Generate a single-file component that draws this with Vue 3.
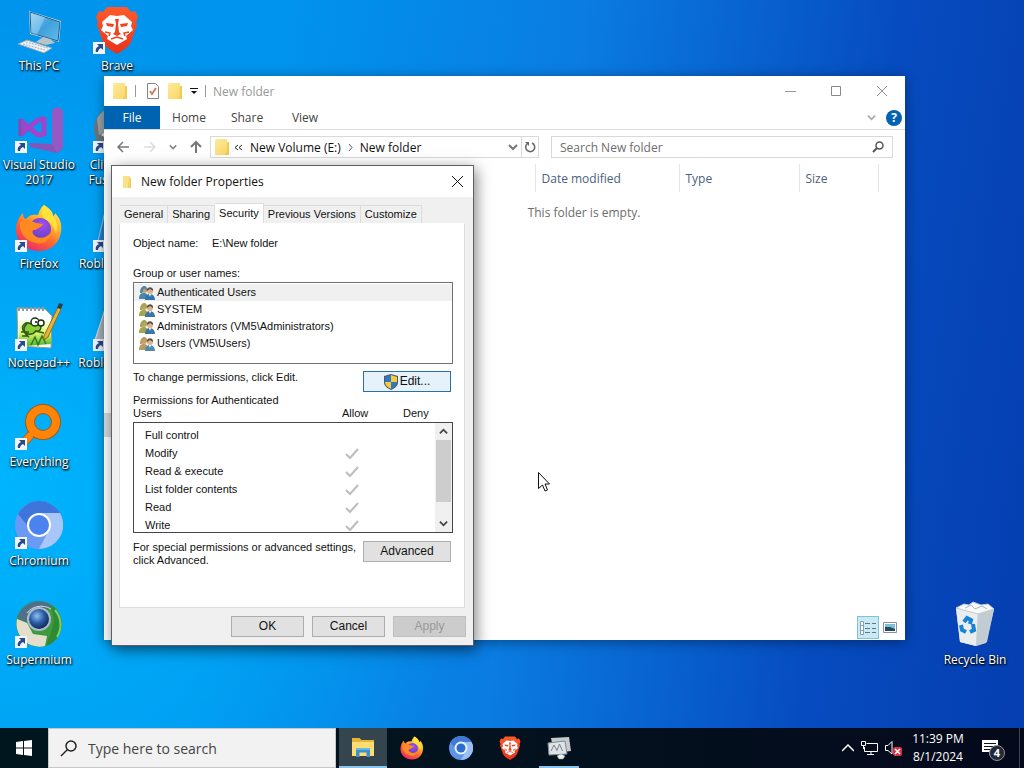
<script setup>
import { ref } from 'vue'

const shortcuts = [
  { name: 'This PC', icon: 'pc', link: false },
  { name: 'Visual Studio 2017', icon: 'vs', link: true },
  { name: 'Firefox', icon: 'firefox', link: true },
  { name: 'Notepad++', icon: 'notepad', link: true },
  { name: 'Everything', icon: 'everything', link: true },
  { name: 'Chromium', icon: 'chromium', link: true },
  { name: 'Supermium', icon: 'supermium', link: true },
  { name: 'Brave', icon: 'brave', link: true },
  { name: 'Clickteam Fusion 2.5', icon: 'clickteam', link: true },
  { name: 'Roblox Player', icon: 'roblox-player', link: true },
  { name: 'Roblox Studio', icon: 'roblox-studio', link: true }
]

const ribbon = ['Home', 'Share', 'View']
const tabs = ['General', 'Sharing', 'Security', 'Previous Versions', 'Customize']
const activeTab = ref('Security')

const users = [
  { name: 'Authenticated Users', left: '#4a86a8', right: '#2f75ad' },
  { name: 'SYSTEM', left: '#a3a650', right: '#3f73a6' },
  { name: 'Administrators (VM5\\Administrators)', left: '#a3a650', right: '#3f73a6' },
  { name: 'Users (VM5\\Users)', left: '#b99a63', right: '#4f8bb0' }
]
const selectedUser = ref('Authenticated Users')

const permissions = [
  { name: 'Full control', allow: false },
  { name: 'Modify', allow: true },
  { name: 'Read & execute', allow: true },
  { name: 'List folder contents', allow: true },
  { name: 'Read', allow: true },
  { name: 'Write', allow: true }
]

const taskbar = [
  { name: 'File Explorer', icon: 'explorer', state: 'active' },
  { name: 'Firefox', icon: 'firefox', state: '' },
  { name: 'Chromium', icon: 'chromium-bar', state: '' },
  { name: 'Brave', icon: 'brave', state: '' },
  { name: 'Monitor', icon: 'monitor', state: 'running' }
]

const folderSearch = ref('')
const taskSearch = ref('')
</script>

<template>
  <div class="screen">
    <!-- Icon sprite -->
    <svg class="sprite" width="0" height="0" aria-hidden="true">
      <defs>
        <linearGradient id="g-screen" x1="0" y1="0" x2="1" y2="1">
          <stop offset="0" stop-color="#8fd0f2" />
          <stop offset="0.5" stop-color="#3fa0dc" />
          <stop offset="1" stop-color="#63bdec" />
        </linearGradient>
        <linearGradient id="g-brave" x1="0" y1="0" x2="0" y2="1">
          <stop offset="0" stop-color="#ff5a2a" />
          <stop offset="1" stop-color="#e8321a" />
        </linearGradient>
        <linearGradient id="g-fox" x1="0.8" y1="0" x2="0.2" y2="1">
          <stop offset="0" stop-color="#fff04a" />
          <stop offset="0.35" stop-color="#ffb02e" />
          <stop offset="0.6" stop-color="#ff6a30" />
          <stop offset="1" stop-color="#e8216e" />
        </linearGradient>
        <radialGradient id="g-foxcore" cx="0.6" cy="0.3" r="0.8">
          <stop offset="0" stop-color="#a34df0" />
          <stop offset="1" stop-color="#5a3fc0" />
        </radialGradient>
        <linearGradient id="g-note" x1="0" y1="0" x2="0" y2="1">
          <stop offset="0" stop-color="#fdfff0" />
          <stop offset="0.5" stop-color="#e3f56a" />
          <stop offset="1" stop-color="#4fb52a" />
        </linearGradient>
        <radialGradient id="g-globe" cx="0.4" cy="0.35" r="0.7">
          <stop offset="0" stop-color="#8fc0f0" />
          <stop offset="0.5" stop-color="#2c5fa8" />
          <stop offset="1" stop-color="#0d2350" />
        </radialGradient>
        <linearGradient id="g-folder" x1="0" y1="0" x2="1" y2="1">
          <stop offset="0" stop-color="#ffeb9c" />
          <stop offset="1" stop-color="#f8d564" />
        </linearGradient>
      </defs>

      <symbol id="i-pc" viewBox="0 0 48 48">
        <path d="M14 5 46 15 44 36 15 28Z" fill="#d6dde2" />
        <path d="M15 6 45 16 43 35 16 27Z" fill="url(#g-screen)" stroke="#245f88" stroke-width="1" />
        <path d="M16 7 30 11 22 29 16 27Z" fill="#c8ebfb" opacity="0.35" />
        <path d="M28 31 35 33 40 37 31 39 21 36Z" fill="#b9c3ca" />
        <path d="M3 38 12 34 37 42 29 47Z" fill="#eef3f6" stroke="#8da3b2" stroke-width="1" />
        <path d="M8 38 30 44M11 36 33 42" stroke="#9fb1bd" stroke-width="1" stroke-dasharray="2 1" />
      </symbol>

      <symbol id="i-vs" viewBox="0 0 48 48">
        <path d="M37 5 42 2 48 5V43L42 48 15 42V38L37 39Z" fill="#8456bc" />
        <path d="M37 5 42 2 48 5V43L42 48 37 39Z" fill="#9558c4" />
        <path d="M6 16 23 30 29 29V14L23 15 6 29Z" fill="none" stroke="#a044cc" stroke-width="5" stroke-linejoin="round" />
        <path d="M5 14V31" stroke="#7c4fb4" stroke-width="3" />
      </symbol>

      <symbol id="i-firefox" viewBox="0 0 48 48">
        <path d="M29 1C34 4 38 8 38 12C40 11 40 10 40 9C45 14 47 20 46 27C45 39 36 47 24 47C11 47 1 38 1 26C1 18 4 13 8 9C8 13 9 14 11 15C14 11 18 10 23 11C24 7 26 3 29 1Z" fill="url(#g-fox)" />
        <circle cx="25" cy="25" r="11" fill="url(#g-foxcore)" />
        <path d="M5 18C11 15 16 16 21 19L28 20C27 23 22 24 21 26C18 25 16 28 19 31C24 36 32 34 36 28C35 37 28 41 21 39C11 37 4 29 5 18Z" fill="#ff8a20" />
        <path d="M29 1C34 4 38 8 38 12C42 17 43 23 41 29C39 22 35 18 30 15C25 12 26 6 29 1Z" fill="#ffe63b" opacity="0.85" />
      </symbol>

      <symbol id="i-notepad" viewBox="0 0 48 48">
        <path d="M2 5 30 6 37 13 36 45 3 43Z" fill="#fff" stroke="#8da080" stroke-width="1" />
        <path d="M4 17 36 18 36 41 11 43 4 38Z" fill="url(#g-note)" />
        <path d="M4 4V8M8 4V8M12 4V8M16 4V8M20 4V8M24 4V8M28 4V8" stroke="#8d9ba5" stroke-width="2" />
        <path d="M8 27C6 22 11 18 16 21L23 19C28 23 26 29 21 28C17 33 11 32 8 27Z" fill="#86cf35" stroke="#2d5a1c" stroke-width="1.5" />
        <path d="M12 21C7 24 9 31 14 34M6 29H14M7 33H13M20 28L29 30" stroke="#2d5a1c" stroke-width="1.5" fill="none" />
        <circle cx="20" cy="19" r="4" fill="#fff" stroke="#18320e" stroke-width="1.5" />
        <circle cx="26" cy="20" r="3" fill="#fff" stroke="#18320e" stroke-width="1.5" />
        <circle cx="21" cy="19" r="1" fill="#111" />
        <path d="M16 42 20 34 23 42 27 33 31 41" fill="none" stroke="#2f7a22" stroke-width="1.5" />
        <path d="M29 33 43 4 46 6 33 34 29 37Z" fill="#e4b53d" stroke="#8d6b22" stroke-width="1" />
        <path d="M42 5 44 0 48 1 46 6Z" fill="#2b3c48" />
      </symbol>

      <symbol id="i-everything" viewBox="0 0 48 48">
        <path d="M15 28 5 39 11 44 21 33" fill="#ff8408" stroke="#a35a12" stroke-width="1" />
        <circle cx="28" cy="20" r="13" fill="none" stroke="#a35a12" stroke-width="10" />
        <circle cx="28" cy="20" r="13" fill="none" stroke="#ff8408" stroke-width="8" />
        <path d="M18 26 8 38 12 40 22 31Z" fill="#ff8408" />
      </symbol>

      <symbol id="i-chromium" viewBox="0 0 48 48">
        <circle cx="24" cy="24" r="24" fill="#6b9af4" />
        <path d="M3 13A24 24 0 0 0 24 48L34 29 14 29Z" fill="#6b9af4" />
        <path d="M24 12H45A24 24 0 0 1 24 48L34 29Z" fill="#a9c6fb" />
        <path d="M3 13A24 24 0 0 1 45 12H24C17 12 13 17 12 24Z" fill="#3f74da" />
        <circle cx="24" cy="24" r="12" fill="#fff" />
        <circle cx="24" cy="24" r="10" fill="#4a82f0" />
      </symbol>

      <symbol id="i-chromium-bar" viewBox="0 0 48 48">
        <circle cx="24" cy="24" r="24" fill="#5b96e8" />
        <path d="M24 12H45A24 24 0 0 1 24 48L34 29Z" fill="#98c0f6" />
        <path d="M3 13A24 24 0 0 1 45 12H24C17 12 13 17 12 24Z" fill="#4379d2" />
        <circle cx="24" cy="24" r="13" fill="#e8f3ff" />
        <circle cx="24" cy="24" r="9" fill="#2f6cd0" />
      </symbol>

      <symbol id="i-supermium" viewBox="0 0 48 48">
        <circle cx="24" cy="24" r="23" fill="#3f9a3e" />
        <path d="M2 18A23 23 0 0 1 38 6L30 10 11 22Z" fill="#50708a" />
        <path d="M2 19 12 23 18 34 32 36 30 46A23 23 0 0 1 2 19Z" fill="#e4dfcd" />
        <path d="M36 5A23 23 0 0 1 31 46L36 32 39 21Z" fill="#2f8b33" />
        <path d="M40 10A23 23 0 0 1 42 37" fill="none" stroke="#7dcf6a" stroke-width="2" />
        <circle cx="24" cy="19" r="12" fill="#a8bccb" />
        <circle cx="24" cy="19" r="10" fill="url(#g-globe)" />
        <path d="M12 13C17 6 28 4 36 9" fill="none" stroke="#cfdde6" stroke-width="1" />
      </symbol>

      <symbol id="i-brave" viewBox="0 0 48 48">
        <path d="M14 1H34L38 6 42 5 45 11 43 16 44 19 38 36C36 41 29 45 24 48C19 45 12 41 10 36L4 19 5 16 3 11 6 5 10 6Z" fill="url(#g-brave)" />
        <path d="M17 9 24 10 31 9 39 16 38 20 40 24 33 30 34 33 24 39 14 33 15 30 8 24 10 20 9 16Z" fill="#fff" />
        <path d="M13 17 21 18 20 21 14 20ZM35 17 27 18 28 21 34 20Z" fill="#f0431f" />
        <path d="M22 13H26L25 18 26 26 28 28 24 30 20 28 22 26 23 18Z" fill="#f0431f" />
        <path d="M18 33 24 31 30 33M12 26 17 27 16 30M36 26 31 27 32 30" fill="none" stroke="#f0431f" stroke-width="1.5" />
      </symbol>

      <symbol id="i-clickteam" viewBox="0 0 48 48">
        <circle cx="24" cy="24" r="23" fill="#6e757c" />
        <path d="M4 14A23 23 0 0 1 24 1V20L6 30Z" fill="#9da3a8" />
        <path d="M8 30 24 16V40Z" fill="#e8e8e8" />
      </symbol>

      <symbol id="i-roblox-player" viewBox="0 0 48 48">
        <path d="M13 3 45 12 36 46 5 37Z" fill="#2e7fd0" stroke="#8ad4ff" stroke-width="1" />
      </symbol>

      <symbol id="i-roblox-studio" viewBox="0 0 48 48">
        <path d="M13 3 45 12 36 46 2 37Z" fill="#a9b2bb" stroke="#dfe4e8" stroke-width="1" />
      </symbol>

      <symbol id="i-bin" viewBox="0 0 48 48">
        <path d="M5 8 43 9 35 43 25 46 9 42Z" fill="#d5dde2" />
        <path d="M5 8 27 12 25 46 9 42Z" fill="#e9edee" />
        <path d="M27 12 43 9 36 42 25 46Z" fill="#c3ccd3" />
        <path d="M5 8 13 4 18 5 22 2 30 5 37 4 43 9 27 14Z" fill="#f8f9f9" stroke="#c0cbd2" stroke-width="1" />
        <path d="M14 8 20 5 24 9 31 6 36 9" fill="none" stroke="#aab8c2" stroke-width="1" />
        <path d="M13 22 16 18 20 20 19 24M22 24 23 30 19 32M15 32 11 30 10 25" fill="none" stroke="#1684d2" stroke-width="4" />
      </symbol>

      <symbol id="i-explorer" viewBox="0 0 48 48">
        <path d="M2 6H17L21 10H46V40H2Z" fill="#e8b53c" />
        <path d="M2 14H46V42H2Z" fill="#ffdd71" />
        <path d="M10 26H38V44H31V35H17V44H10Z" fill="#3a93cf" />
        <path d="M10 26H38V30H10Z" fill="#68b8e6" />
      </symbol>

      <symbol id="i-monitor" viewBox="0 0 48 48">
        <path d="M8 4 44 2 48 30 14 34Z" fill="#c5cbcf" />
        <path d="M2 14 36 10 40 36 4 38Z" fill="#dfe3e5" stroke="#7f8a92" stroke-width="2" />
        <path d="M8 30 14 18 20 29 25 16 31 30" fill="none" stroke="#76828b" stroke-width="2" />
        <path d="M20 40 28 36 36 40 32 46 24 46Z" fill="#eef1f2" stroke="#8c969c" stroke-width="1" />
      </symbol>

      <symbol id="i-folder" viewBox="0 0 16 16">
        <path d="M2 0H13V12H15V16H1V1Z" fill="url(#g-folder)" />
        <path d="M13 3 15 3V16H11L13 12Z" fill="#f0cb52" />
      </symbol>

      <symbol id="i-chevron" viewBox="0 0 10 10">
        <path d="M1 3 5 7 9 3" fill="none" stroke="currentColor" stroke-width="2" />
      </symbol>
    </svg>

    <main class="desktop">
      <button
        v-for="item in shortcuts"
        :key="item.name"
        type="button"
        class="shortcut"
      >
        <span class="shortcut-icon">
          <svg width="48" height="48"><use :href="'#i-' + item.icon" /></svg>
          <svg v-if="item.link" class="arrow" viewBox="0 0 12 12" width="12" height="12">
            <path d="M0 0H12V12H0Z" fill="#f2f5fa" />
            <path d="M4 2H10V8L8 6C6 7 5 8 5 10H3C2 7 4 5 6 4Z" fill="#264a8c" />
          </svg>
        </span>
        <span class="shortcut-name">{{ item.name }}</span>
      </button>
      <button type="button" class="shortcut bin">
        <span class="shortcut-icon">
          <svg width="48" height="48"><use href="#i-bin" /></svg>
        </span>
        <span class="shortcut-name">Recycle Bin</span>
      </button>

      <!-- Explorer window -->
      <section class="explorer">
        <header class="ex-title">
          <svg width="16" height="16"><use href="#i-folder" /></svg>
          <i class="bar"></i>
          <svg class="check-doc" viewBox="0 0 14 16" width="14" height="16">
            <path d="M1.5.5H9.5L12.5 3.5V15.5H1.5Z" fill="#fff" stroke="#858585" />
            <path d="M4 8 6 11 10 5" fill="none" stroke="#d08060" stroke-width="2" />
          </svg>
          <svg width="16" height="16"><use href="#i-folder" /></svg>
          <svg class="menu-mark" viewBox="0 0 8 6" width="8" height="6"><path d="M0 0H8V1H0ZM1 3H7L4 6Z" fill="#111" /></svg>
          <i class="bar"></i>
          <h2>New folder</h2>
          <div class="win-buttons">
            <button type="button" aria-label="Minimize">
              <svg viewBox="0 0 11 11" width="11" height="11"><path d="M0 5.5H11" stroke="#999" /></svg>
            </button>
            <button type="button" aria-label="Maximize">
              <svg viewBox="0 0 11 11" width="11" height="11"><path d="M.5.5H9.5V9.5H.5Z" fill="none" stroke="#888" /></svg>
            </button>
            <button type="button" aria-label="Close">
              <svg viewBox="0 0 11 11" width="11" height="11"><path d="M0 0 10 10M10 0 0 10" stroke="#999" /></svg>
            </button>
          </div>
        </header>

        <nav class="ribbon">
          <button type="button" class="file">File</button>
          <button v-for="name in ribbon" :key="name" type="button">{{ name }}</button>
          <svg class="expand" width="9" height="9"><use href="#i-chevron" /></svg>
          <button type="button" class="help" aria-label="Help">?</button>
        </nav>

        <div class="nav-row">
          <div class="arrows">
            <button type="button" aria-label="Back">
              <svg viewBox="0 0 14 12" width="14" height="12"><path d="M13 6H2M7 1 2 6 7 11" fill="none" stroke="#777" stroke-width="1.5" /></svg>
            </button>
            <button type="button" aria-label="Forward">
              <svg viewBox="0 0 14 12" width="14" height="12"><path d="M1 6H12M7 1 12 6 7 11" fill="none" stroke="#ddd" stroke-width="1.5" /></svg>
            </button>
            <button type="button" aria-label="Recent locations">
              <svg width="8" height="8"><use href="#i-chevron" /></svg>
            </button>
            <button type="button" aria-label="Up">
              <svg viewBox="0 0 12 14" width="12" height="14"><path d="M6 13V2M1 7 6 2 11 7" fill="none" stroke="#777" stroke-width="2" /></svg>
            </button>
          </div>
          <div class="address">
            <svg width="16" height="16"><use href="#i-folder" /></svg>
            <svg class="crumb-more" viewBox="0 0 8 7" width="8" height="7"><path d="M4 1 1 3.5 4 6M8 1 5 3.5 8 6" fill="none" stroke="#222" /></svg>
            <button type="button">New Volume (E:)</button>
            <svg class="crumb-sep" viewBox="0 0 5 7" width="5" height="7"><path d="M1 0 4 3.5 1 7" fill="none" stroke="#555" /></svg>
            <button type="button">New folder</button>
            <svg class="drop" width="10" height="10"><use href="#i-chevron" /></svg>
            <button type="button" class="refresh" aria-label="Refresh">
              <svg viewBox="0 0 12 12" width="12" height="12">
                <path d="M3 3A4.5 4.5 0 1 0 8 2" fill="none" stroke="#666" stroke-width="1.5" />
                <path d="M1 1H5V5Z" fill="#666" />
              </svg>
            </button>
          </div>
          <label class="folder-search">
            <input v-model="folderSearch" type="text" placeholder="Search New folder" aria-label="Search New folder" />
            <svg viewBox="0 0 12 12" width="12" height="12"><circle cx="7.5" cy="4.5" r="3.5" fill="none" stroke="#555" stroke-width="1.5" /><path d="M5 7 1 11" stroke="#555" stroke-width="2" /></svg>
          </label>
        </div>

        <div class="ex-body">
          <aside class="tree"><div class="tree-selected"></div></aside>
          <div class="files">
            <table>
              <thead>
                <tr>
                  <th class="col-name"></th>
                  <th class="col-date">Date modified</th>
                  <th class="col-type">Type</th>
                  <th class="col-size">Size</th>
                </tr>
              </thead>
            </table>
            <p>This folder is empty.</p>
          </div>
        </div>

        <footer class="ex-status">
          <button type="button" class="view on" aria-label="Details">
            <svg viewBox="0 0 16 14" width="16" height="14">
              <path d="M.5.5H3.5V4.5H.5ZM.5 4.5H3.5V9.5H.5ZM.5 9.5H3.5V13.5H.5Z" fill="#fff" stroke="#7fa3b5" />
              <path d="M5 2.5H10M12 2.5H16M5 7.5H10M12 7.5H16M5 11.5H10M12 11.5H16" stroke="#5f7783" />
            </svg>
          </button>
          <button type="button" class="view" aria-label="Large icons">
            <svg viewBox="0 0 14 11" width="14" height="11">
              <path d="M.5.5H13.5V10.5H.5Z" fill="#fff" stroke="#8a8fa5" />
              <path d="M2 2H12V9H2Z" fill="#7dbedd" />
              <path d="M2 5 7 5 12 7V9H2Z" fill="#22495c" />
            </svg>
          </button>
        </footer>
      </section>

      <!-- Properties dialog -->
      <section class="dialog">
        <header class="dlg-title">
          <svg width="10" height="12" viewBox="0 0 10 12"><path d="M1 0H8V10H9V12H1Z" fill="#fbe18a" /><path d="M7 2H9V12H6Z" fill="#f0cf63" /></svg>
          <h2>New folder Properties</h2>
          <button type="button" aria-label="Close">
            <svg viewBox="0 0 11 11" width="11" height="11"><path d="M0 0 11 11M11 0 0 11" stroke="#111" /></svg>
          </button>
        </header>

        <div class="tabs" role="tablist">
          <button
            v-for="tab in tabs"
            :key="tab"
            type="button"
            role="tab"
            :class="{ active: tab === activeTab }"
            @click="activeTab = tab"
          >{{ tab }}</button>
        </div>

        <div class="panel">
          <dl class="object">
            <dt>Object name:</dt>
            <dd>E:\New folder</dd>
          </dl>

          <p class="group-label" id="group-label">Group or user names:</p>
          <ul class="users" aria-labelledby="group-label">
            <li
              v-for="user in users"
              :key="user.name"
              :class="{ selected: user.name === selectedUser }"
              @click="selectedUser = user.name"
            >
              <svg viewBox="0 0 16 14" width="16" height="14">
                <circle cx="5" cy="4" r="3" fill="#c6a06b" />
                <path d="M1 7C1 -2 9 -2 8 5L5 2 3 7Z" :fill="user.left" />
                <path d="M0 13C0 8 2 7 5 7S9 9 9 13Z" :fill="user.left" />
                <circle cx="11" cy="5" r="3" fill="#d9b48c" />
                <path d="M8 5C7 0 15 0 14 5L11 3Z" fill="#5b5048" />
                <path d="M6 14C6 9 9 8 11 8S16 10 16 14Z" :fill="user.right" />
                <path d="M10 8 11 11 12 8Z" fill="#fff" />
              </svg>
              <span>{{ user.name }}</span>
            </li>
          </ul>

          <div class="edit-row">
            <p>To change permissions, click Edit.</p>
            <button type="button" class="btn focused">
              <svg viewBox="0 0 14 16" width="14" height="16">
                <path d="M7 0 14 2V8C14 12 11 14 7 16C3 14 0 12 0 8V2Z" fill="#4b5a66" />
                <path d="M7 1V8H1V3Z" fill="#2f78c4" />
                <path d="M7 1 13 3V8H7Z" fill="#f7cb3c" />
                <path d="M1 8H7V15C3 13 1 11 1 8Z" fill="#f7cb3c" />
                <path d="M7 8H13C13 11 11 13 7 15Z" fill="#2f78c4" />
              </svg>
              <span>Edit...</span>
            </button>
          </div>

          <div class="perm-head">
            <p>Permissions for Authenticated Users</p>
            <span class="head-allow">Allow</span>
            <span>Deny</span>
          </div>
          <div class="perm-box">
            <table>
              <tbody>
                <tr v-for="perm in permissions" :key="perm.name">
                  <td class="perm-name">{{ perm.name }}</td>
                  <td class="perm-allow">
                    <svg v-if="perm.allow" viewBox="0 0 14 12" width="14" height="12"><path d="M1 6 5 10 13 1" fill="none" stroke="#bdbdbd" stroke-width="2" /></svg>
                  </td>
                  <td></td>
                </tr>
              </tbody>
            </table>
            <div class="scroll">
              <button type="button" class="up" aria-label="Scroll up"><svg width="9" height="9"><use href="#i-chevron" /></svg></button>
              <div class="thumb"></div>
              <button type="button" aria-label="Scroll down"><svg width="9" height="9"><use href="#i-chevron" /></svg></button>
            </div>
          </div>

          <div class="adv-row">
            <p>For special permissions or advanced settings, click Advanced.</p>
            <button type="button" class="btn">Advanced</button>
          </div>
        </div>

        <footer class="dlg-foot">
          <button type="button" class="btn">OK</button>
          <button type="button" class="btn">Cancel</button>
          <button type="button" class="btn" disabled>Apply</button>
        </footer>
      </section>

      <svg class="cursor" viewBox="0 0 12 20" width="12" height="20">
        <path d="M.5.5V16.5L4.5 13 7 19 9.5 18 7 12H11.5Z" fill="#fff" stroke="#111" />
      </svg>
    </main>

    <footer class="taskbar">
      <button type="button" class="start" aria-label="Start">
        <svg viewBox="0 0 16 16" width="16" height="16"><path d="M0 2 7 1V7.5H0ZM8 1 16 0V7.5H8ZM0 8.5H7V15L0 14ZM8 8.5H16V16L8 15Z" fill="#fff" /></svg>
      </button>
      <label class="task-search">
        <svg viewBox="0 0 17 17" width="17" height="17"><circle cx="11" cy="6" r="5" fill="none" stroke="#222" stroke-width="1.5" /><path d="M7.5 9.5 1 16" stroke="#222" stroke-width="1.5" /></svg>
        <input v-model="taskSearch" type="text" placeholder="Type here to search" aria-label="Type here to search" />
      </label>
      <div class="apps">
        <button
          v-for="app in taskbar"
          :key="app.name"
          type="button"
          :class="app.state"
          :aria-label="app.name"
        >
          <svg width="24" height="24"><use :href="'#i-' + app.icon" /></svg>
        </button>
      </div>
      <div class="tray">
        <svg viewBox="0 0 12 8" width="12" height="8"><path d="M0 7 6 1 12 7" fill="none" stroke="#fff" stroke-width="1.5" /></svg>
        <svg viewBox="0 0 17 14" width="17" height="14">
          <path d="M5.5 2.5H16.5V10.5H3.5V6M10 11V13.5M6 13.5H13" fill="none" stroke="#fff" />
          <path d="M.5.5H4.5V4.5H.5ZM2.5 5V8" fill="none" stroke="#fff" />
        </svg>
        <svg viewBox="0 0 17 15" width="17" height="15">
          <path d="M.5 4.5H3L7 .5V13L3 9.5H.5Z" fill="none" stroke="#fff" />
          <rect x="8" y="6" width="9" height="9" rx="2" fill="#d8303f" />
          <path d="M10 8 15 13M15 8 10 13" stroke="#fff" stroke-width="1.5" />
        </svg>
        <div class="clock">
          <span>11:39 PM</span>
          <span>8/1/2024</span>
        </div>
        <button type="button" class="notes" aria-label="Notifications">
          <svg viewBox="0 0 16 16" width="16" height="16"><path d="M0 0H16V12H10L7 15V12H0Z" fill="#fff" /><path d="M2 3.5H14M2 6.5H14M2 9.5H10" stroke="#0a1426" /></svg>
          <span>4</span>
        </button>
      </div>
    </footer>
  </div>
</template>

<style>
html,
body {
  overflow: hidden;
}
</style>

<style scoped>
* {
  box-sizing: border-box;
}

.screen {
  display: flex;
  flex-direction: column;
  height: 100vh;
  font-family: "Open Sans", "Noto Sans", sans-serif;
  font-size: 12px;
  color: #1a1a1a;
}

.sprite {
  position: absolute;
}

svg {
  display: block;
  flex: none;
}

h2,
p,
ul,
dl,
dd {
  margin: 0;
  padding: 0;
}

button {
  border: 0;
  padding: 0;
  background: none;
  font: inherit;
  color: inherit;
}

input {
  min-width: 0;
  flex: 1;
  border: 0;
  padding: 0;
  outline: 0;
  background: none;
  font: inherit;
}

/* Desktop */
.desktop {
  position: relative;
  flex: 1;
  display: grid;
  grid-template-columns: 78px 78px 1fr 78px;
  grid-template-rows: repeat(7, 99px);
  grid-auto-flow: column;
  padding: 6px 10px 0 0;
  background:
    radial-gradient(ellipse 480px 480px at 0% 68%, rgba(0, 184, 255, 0.9), rgba(0, 184, 255, 0)),
    linear-gradient(98deg, #0094ec 0%, #0094ee 25%, #0a7ce2 52%, #064cc0 80%, #053eb0 100%);
}

.shortcut {
  display: flex;
  flex-direction: column;
  align-items: center;
  justify-content: flex-start;
  gap: 4px;
  color: #fff;
  line-height: 15px;
  text-shadow: 1px 1px 2px #000, 0 1px 2px #000;
}

.shortcut-icon {
  position: relative;
}

.arrow {
  position: absolute;
  left: 0;
  bottom: 0;
}

.bin {
  grid-column: 4;
  grid-row: 7;
}

/* Explorer */
.explorer {
  position: absolute;
  top: 76px;
  right: 119px;
  bottom: 88px;
  left: 104px;
  display: flex;
  flex-direction: column;
  background: #fff;
  box-shadow: 0 2px 12px rgba(0, 0, 0, 0.4);
}

.ex-title {
  display: flex;
  align-items: center;
  gap: 7px;
  height: 30px;
  padding-left: 8px;
}

.bar {
  width: 1px;
  height: 12px;
  background: #9a9a9a;
}

.check-doc {
  margin-left: 3px;
}

.ex-title h2 {
  font-size: 12px;
  font-weight: 400;
  color: #999;
}

.win-buttons {
  display: flex;
  margin-left: auto;
}

.win-buttons button {
  width: 46px;
  display: flex;
  justify-content: center;
}

.ribbon {
  display: flex;
  align-items: center;
  height: 24px;
  border-bottom: 1px solid #dcdcdc;
  color: #444;
}

.ribbon button {
  width: 58px;
  height: 23px;
}

.ribbon .file {
  width: 56px;
  background: #0063b1;
  color: #fff;
}

.ribbon .expand {
  margin-left: auto;
  margin-right: 10px;
  color: #aaa;
}

.ribbon .help {
  width: 16px;
  height: 16px;
  margin-right: 3px;
  border-radius: 50%;
  background: #0063b1;
  color: #fff;
  font-weight: 700;
  line-height: 16px;
}

.nav-row {
  display: flex;
  align-items: center;
  height: 34px;
  padding-right: 12px;
}

.arrows {
  display: flex;
  align-items: center;
  justify-content: space-between;
  width: 106px;
  padding: 0 8px 0 12px;
  color: #888;
}

.address {
  display: flex;
  align-items: center;
  width: 329px;
  height: 22px;
  margin-right: 12px;
  padding-left: 3px;
  border: 1px solid #d9d9d9;
  color: #111;
}

.crumb-more {
  margin: 0 8px 0 4px;
}

.crumb-sep {
  margin: 0 7px;
}

.drop {
  margin-left: auto;
  margin-right: 3px;
  color: #777;
}

.refresh {
  display: flex;
  align-items: center;
  justify-content: center;
  width: 17px;
  height: 20px;
  border-left: 1px solid #d9d9d9;
}

.folder-search {
  flex: 1;
  display: flex;
  align-items: center;
  height: 22px;
  padding: 0 8px;
  border: 1px solid #d9d9d9;
}

.folder-search input::placeholder {
  color: #6d6d6d;
}

.ex-body {
  flex: 1;
  display: flex;
  min-height: 0;
}

.tree {
  width: 159px;
  padding-top: 249px;
}

.tree-selected {
  height: 24px;
  background: #d9d9d9;
}

.files {
  flex: 1;
}

.files table {
  border-collapse: collapse;
  table-layout: fixed;
  width: 616px;
}

.files th {
  height: 28px;
  padding: 0 6px;
  border-right: 1px solid #e5e5e5;
  font-weight: 400;
  text-align: left;
  color: #4c607a;
}

.col-name {
  width: 272px;
}

.col-date {
  width: 144px;
}

.col-type {
  width: 120px;
}

.files p {
  margin-top: 12px;
  line-height: 18px;
  text-align: center;
  color: #6d6d6d;
}

.ex-status {
  display: flex;
  justify-content: flex-end;
  height: 24px;
  padding-right: 4px;
}

.view {
  display: flex;
  align-items: center;
  justify-content: center;
  width: 22px;
  height: 23px;
  border: 1px solid transparent;
}

.view.on {
  border-color: #7fc3dd;
  background: #cce8f4;
}

/* Properties dialog */
.dialog {
  position: absolute;
  top: 165px;
  left: 111px;
  width: 363px;
  padding-bottom: 8px;
  border: 1px solid #5b6068;
  background: #f0f0f0;
  box-shadow: 2px 4px 14px rgba(0, 0, 0, 0.5);
  font-family: "Liberation Sans", Arial, sans-serif;
  font-size: 11px;
  line-height: 13px;
  color: #111;
}

.dlg-title {
  display: flex;
  align-items: center;
  gap: 9px;
  height: 31px;
  padding: 0 10px;
  background: #fff;
}

.dlg-title h2 {
  flex: 1;
  font-family: "Open Sans", "Noto Sans", sans-serif;
  font-size: 12px;
  font-weight: 400;
}

.tabs {
  display: flex;
  align-items: flex-end;
  height: 26px;
  padding-left: 8px;
}

.tabs button {
  height: 18px;
  padding: 0 4px;
  border: 1px solid #dcdcdc;
  border-bottom: 0;
  border-left-width: 0;
}

.tabs .active {
  height: 20px;
  background: #fff;
}

.panel {
  margin: 0 8px 0 7px;
  height: 385px;
  padding: 13px 11px 0 13px;
  border: 1px solid #dcdcdc;
  border-top-color: #fff;
  background: #fff;
}

.object {
  display: flex;
}

.object dt {
  width: 79px;
}

.group-label {
  margin-top: 17px;
}

.users {
  height: 82px;
  margin-top: 2px;
  padding: 1px 0;
  border: 1px solid #6e7178;
  list-style: none;
}

.users li {
  display: flex;
  align-items: center;
  gap: 2px;
  height: 17px;
  padding-left: 5px;
}

.users .selected {
  background: #f0f0f0;
}

.edit-row,
.adv-row {
  display: flex;
  justify-content: space-between;
  margin-top: 7px;
  padding-right: 2px;
}

.btn {
  display: flex;
  align-items: center;
  justify-content: center;
  gap: 2px;
  width: 73px;
  height: 21px;
  border: 1px solid #adadad;
  background: #e1e1e1;
  font-size: 12px;
}

.btn:disabled {
  border-color: #bfbfbf;
  background: #ccc;
  color: #999;
}

.edit-row .btn,
.adv-row .btn {
  width: 88px;
}

.focused {
  border-color: #2b6fa5;
  background: #e5f1fb;
}

.perm-head {
  display: flex;
  align-items: flex-end;
  margin-top: 2px;
}

.perm-head p {
  width: 160px;
  margin-right: 49px;
}

.head-allow {
  width: 61px;
}

.perm-box {
  display: flex;
  height: 111px;
  margin-top: 2px;
  border: 1px solid #44474d;
  overflow: hidden;
}

.perm-box table {
  flex: 1;
  align-self: flex-start;
  margin-top: 3px;
  border-collapse: collapse;
}

.perm-box td {
  height: 18px;
  padding: 0;
}

.perm-box .perm-name {
  width: 200px;
  padding-left: 11px;
}

.perm-allow svg {
  margin: 2px 11px 0;
}

.scroll {
  display: flex;
  flex-direction: column;
  justify-content: space-between;
  width: 17px;
  background: #f0f0f0;
}

.scroll button {
  display: flex;
  align-items: center;
  justify-content: center;
  height: 17px;
  color: #444;
}

.scroll .up svg {
  transform: rotate(180deg);
}

.thumb {
  height: 62px;
  margin: 0 1px 13px;
  background: #cdcdcd;
}

.adv-row {
  margin-top: 8px;
}

.adv-row p {
  width: 228px;
}

.dlg-foot {
  display: flex;
  justify-content: flex-end;
  gap: 8px;
  margin-top: 8px;
  padding-right: 7px;
}

.cursor {
  position: absolute;
  top: 472px;
  left: 538px;
}

/* Taskbar */
.taskbar {
  display: flex;
  height: 40px;
  background: linear-gradient(90deg, #00161f 0%, #03121e 50%, #04091c 100%);
  color: #fff;
}

.start {
  display: flex;
  align-items: center;
  justify-content: center;
  width: 48px;
}

.task-search {
  display: flex;
  align-items: center;
  gap: 11px;
  width: 288px;
  padding-left: 11px;
  border: 1px solid #c5c9cb;
  background: #f2f2f2;
}

.task-search input {
  font-size: 14px;
}

.task-search input::placeholder {
  color: #444;
}

.apps {
  display: flex;
  gap: 1px;
  margin-left: 3px;
}

.apps button {
  position: relative;
  display: flex;
  align-items: center;
  justify-content: center;
  width: 48px;
}

.apps .active {
  background: #35454e;
  border-bottom: 2px solid #8ac4ec;
}

.apps .running::after {
  content: "";
  position: absolute;
  right: 4px;
  bottom: 0;
  left: 4px;
  height: 2px;
  background: #8ac4ec;
}

.tray {
  display: flex;
  align-items: center;
  gap: 7px;
  margin-left: auto;
  margin-right: 4px;
  padding-right: 15px;
  border-right: 1px solid #39414f;
}

.clock {
  display: flex;
  flex-direction: column;
  width: 58px;
  line-height: 18px;
  text-align: center;
  white-space: nowrap;
}

.notes {
  position: relative;
  margin-left: 8px;
  padding-right: 6px;
}

.notes span {
  position: absolute;
  top: 5px;
  left: 7px;
  width: 16px;
  height: 16px;
  border: 1px solid #8b9099;
  border-radius: 50%;
  background: #222a36;
  font-size: 11px;
  font-weight: 700;
  line-height: 14px;
}
</style>
